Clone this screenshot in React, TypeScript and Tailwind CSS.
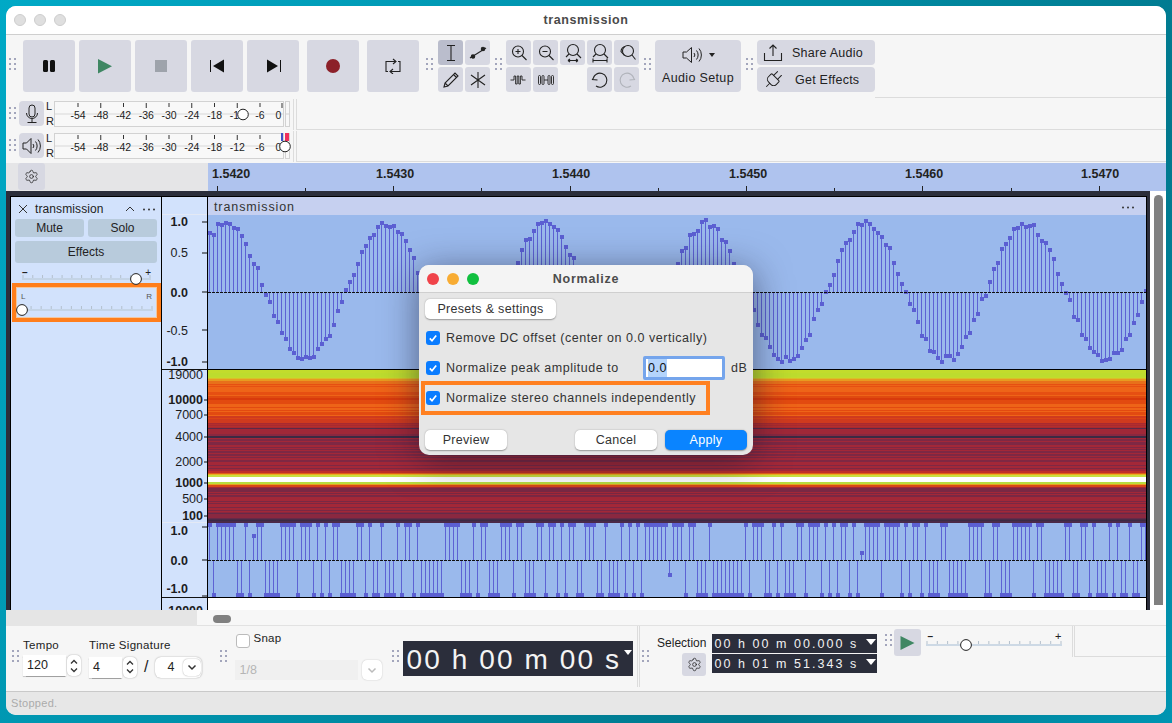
import type { ReactNode } from "react";
import { Plug, Settings } from "lucide-react";

const MAJOR = [217, 393, 570, 746, 922, 1099];
const MINOR = [305, 481, 658, 834, 1011];
const RULER_LABELS: [string, number][] = [
  ["1.5420", 212],
  ["1.5430", 376],
  ["1.5440", 552],
  ["1.5450", 729],
  ["1.5460", 905],
  ["1.5470", 1081],
];
const DB = ["-54", "-48", "-42", "-36", "-30", "-24", "-18", "-12", "-6", "0"];

const WAVE_W = 938;
const noise = (k: number) => {
  const v = Math.sin(k * 12.9898) * 43758.5453;
  return v - Math.floor(v);
};
const SAMPLES = Array.from({ length: 235 }, (_, k) => k);

// samples of the clipped lower clip that sit at +1, the rest sit at -1
const UP = new Set([
  0, 2, 3, 4, 5, 6, 9, 12, 13, 18, 19, 20, 21, 23, 24, 25, 27, 29, 31, 32, 37, 38, 40, 43, 47, 49, 50, 52, 59, 60, 61,
  62, 66, 68, 69, 73, 74, 75, 77, 78, 82, 83, 85, 86, 88, 90, 91, 94, 95, 96, 99, 103, 105, 107, 109, 110, 111, 112,
  113, 114, 116, 117, 118, 120, 121, 125, 134, 136, 137, 138, 141, 143, 147, 148, 150, 151, 152, 154, 156, 158, 159,
  161, 164, 165, 166, 167, 169, 170, 171, 172, 174, 176, 177, 179, 183, 184, 190, 191, 192, 193, 196, 197, 201, 202,
  203, 204, 205, 207, 208, 214, 215, 218, 219, 221, 225, 227, 230, 233, 234,
]);
const MID: Record<number, number> = { 11: 13, 115: 52, 163: 30 };

const SPEC_BANDS: [number, number, string, string][] = [
  [370, 378, "#bddc2e", "#c2dc2c"],
  [378, 379, "#d8c028", "#d8c028"],
  [379, 381, "#e89a20", "#e89a20"],
  [381, 384, "#e8701a", "#e8701a"],
  [384, 396, "#e64f12", "#ee6418"],
  [396, 400, "#d83a0c", "#e04a10"],
  [400, 416, "#e24a10", "#ee6418"],
  [416, 423, "#cf3a1e", "#dc4416"],
  [423, 428, "#a82a30", "#b42e2c"],
  [428, 429, "#5a2a48", "#5a2a48"],
  [429, 436, "#a02838", "#8a2840"],
  [436, 438, "#3a2a44", "#3a2a44"],
  [438, 471, "#a32838", "#7e2844"],
  [471, 473, "#c03028", "#c03028"],
  [473, 474, "#e06018", "#e06018"],
  [474, 475, "#e8b020", "#e8b020"],
  [475, 477, "#c8e040", "#c8e040"],
  [477, 482, "#ffffff", "#ffffff"],
  [482, 484, "#b8dc40", "#b8dc40"],
  [484, 485, "#e8a020", "#e8a020"],
  [485, 487, "#d84818", "#d84818"],
  [487, 512, "#a32838", "#7a2844"],
  [512, 519, "#8a2840", "#662a48"],
  [519, 523, "#4a2a48", "#3a2a44"],
];

function Grip({ className = "" }: { className?: string }) {
  return (
    <div className={`grid w-[7px] shrink-0 grid-cols-2 gap-x-[3px] gap-y-[3px] ${className}`}>
      {[0, 1, 2, 3, 4, 5].map((i) => (
        <span key={i} className="h-[2px] w-[2px] bg-[#a3a6bc]" />
      ))}
    </div>
  );
}

function Dots({ className = "" }: { className?: string }) {
  return (
    <svg width="14" height="3" viewBox="0 0 14 3" fill="#333" className={className}>
      <circle cx="2" cy="1.5" r="1" />
      <circle cx="7" cy="1.5" r="1" />
      <circle cx="12" cy="1.5" r="1" />
    </svg>
  );
}

function BigBtn({ children, className = "" }: { children: ReactNode; className?: string }) {
  return (
    <div className={`flex h-[52px] w-[52px] items-center justify-center rounded-[3px] bg-[#d7d8e2] ${className}`}>
      {children}
    </div>
  );
}

function Tool({ children, active, className = "" }: { children?: ReactNode; active?: boolean; className?: string }) {
  return (
    <div
      className={`flex h-[25px] w-[25px] items-center justify-center rounded-[3px] ${active ? "bg-[#babdcc]" : "bg-[#d7d8e2]"} ${className}`}
    >
      <svg width="22" height="22" viewBox="0 0 22 22" fill="none" stroke="currentColor" strokeWidth="1.1">
        {children}
      </svg>
    </div>
  );
}

function Meter({ thumb, peak }: { thumb: number; peak?: boolean }) {
  return (
    <svg width="240" height="28" className="shrink-0">
      <rect x="0.5" y="0.5" width="229" height="25" fill="#f8f8f8" stroke="#d2d2d2" />
      <line x1="1" x2="229" y1="13" y2="13" stroke="#d8d8d8" />
      {DB.map((d, i) => {
        const x = i === 9 ? 228 : 24 + i * 22.75;
        return (
          <g key={d}>
            <line x1={x} x2={x} y1={2} y2={i % 2 ? 7 : 6} stroke="#333" />
            <text x={i === 9 ? 224.5 : x} y={17.5} textAnchor="middle" fontSize="10.5" fill="#222">
              {d}
            </text>
          </g>
        );
      })}
      <rect x="231.5" y="0.5" width="4" height="25" fill="#f8f8f8" stroke="#d2d2d2" />
      <line x1="231" x2="236" y1="13" y2="13" stroke="#d2d2d2" />
      {peak && <rect x="227" y="0" width="2" height="8" fill="#3c52c8" />}
      {peak && <rect x="231" y="0" width="4" height="8" fill="#f0305c" />}
      <circle cx={thumb} cy="13.5" r="5.3" fill="#fff" stroke="#222" strokeWidth="1" />
    </svg>
  );
}

function MeterRow({ icon, thumb, peak }: { icon: ReactNode; thumb: number; peak?: boolean }) {
  return (
    <div className="flex h-[32px] items-start">
      <Grip className="ml-[3px] mt-[8px]" />
      <div className="ml-[3px] mt-[2px] flex h-[25px] w-[25px] items-center justify-center rounded-[4px] bg-[#d7d8e2]">
        {icon}
      </div>
      <div className="ml-[2px] mt-[1px] flex h-[28px] w-[8px] flex-col justify-between text-[11px] leading-[13px] text-[#222]">
        <span>L</span>
        <span>R</span>
      </div>
      <div className="mt-[2px] flex">
        <Meter thumb={thumb} peak={peak} />
      </div>
      <div className="ml-[-1px] h-[31px] w-[4px] border-x border-[#dcdcdc]" />
      <div className="h-[31px] flex-1 border-b border-[#dcdcdc]" />
    </div>
  );
}

function SmallSlider({ width, thumb, color = "#bfcfdf" }: { width: number; thumb: number; color?: string }) {
  const ticks = Array.from({ length: 14 }, (_, i) => 2 + (i * (width - 4)) / 13);
  return (
    <svg width={width} height="14" className="overflow-visible">
      {ticks.map((x) => (
        <line key={x} x1={x} x2={x} y1="5" y2="8" stroke="#b4c0cc" />
      ))}
      <line x1="1" x2={width - 1} y1="9" y2="9" stroke={color} strokeWidth="1.6" />
      <circle cx={thumb} cy="9" r="5.4" fill="#fff" stroke="#222" strokeWidth="1" />
    </svg>
  );
}

function TrackPanel() {
  return (
    <div className="flex w-[150px] shrink-0 flex-col bg-[#d2e2fc] text-[#222]">
      <div className="flex h-[22px] items-center pt-[2px]">
        <svg width="10" height="10" viewBox="0 0 10 10" className="ml-[7px]" stroke="#333" fill="none">
          <path d="M1 1l8 8M9 1l-8 8" />
        </svg>
        <span className="ml-[7px] flex-1 text-[12px] tracking-[0.1px]">transmission</span>
        <svg width="10" height="6" viewBox="0 0 10 6" stroke="#333" fill="none">
          <path d="M1 5l4-4 4 4" />
        </svg>
        <Dots className="ml-[7px] mr-[5px]" />
      </div>
      <div className="mt-0 flex gap-[4px] px-[4px]">
        <div className="flex h-[18px] flex-1 items-center justify-center rounded-[3px] bg-[#b8cbdc] text-[12px]">
          Mute
        </div>
        <div className="flex h-[18px] flex-1 items-center justify-center rounded-[3px] bg-[#b8cbdc] text-[12px]">
          Solo
        </div>
      </div>
      <div className="mx-[4px] mt-[4px] flex h-[22px] items-center justify-center rounded-[3px] bg-[#b8cbdc] text-[12px]">
        Effects
      </div>
      <div className="relative mt-[5px] h-[15px] px-[10px]">
        <span className="absolute left-[11px] top-[-3px] text-[10px] font-bold">–</span>
        <span className="absolute right-[10px] top-[-3px] text-[10px]">+</span>
        <div className="pt-[2px]">
          <SmallSlider width={131} thumb={115} />
        </div>
      </div>
      <div className="ml-[1px] border-[4px] border-[#ff7e1c] p-0">
        <div className="relative h-[31px] border border-[#f3c79f] px-[2px]">
          <span className="absolute left-[4px] top-[3px] text-[8px] text-[#555]">L</span>
          <span className="absolute right-[4px] top-[3px] text-[8px] text-[#555]">R</span>
          <div className="pt-[13px]">
            <SmallSlider width={135} thumb={3} />
          </div>
        </div>
      </div>
    </div>
  );
}

function VRuler() {
  const big = [
    ["1.0", 226, true],
    ["0.5", 257, false],
    ["0.0", 297, true],
    ["-0.5", 335, false],
    ["-1.0", 366, true],
    ["19000", 379, false],
    ["10000", 404, true],
    ["7000", 419, false],
    ["4000", 441, false],
    ["2000", 466, false],
    ["1000", 487, true],
    ["500", 503, false],
    ["100", 520, true],
    ["1.0", 535, true],
    ["0.0", 565, true],
    ["-1.0", 593, true],
    ["10000", 615, true],
  ] as const;
  const ticks = [222, 253, 292, 330, 362, 400, 415, 437, 462, 483, 499, 516, 527, 560, 596];
  return (
    <svg width="45" height="413" viewBox="162 197 45 413" className="shrink-0">
      <rect x="162" y="197" width="45" height="413" fill="#d2e2fc" />
      <line x1="162" x2="207" y1="214.5" y2="214.5" stroke="#e3e9f5" />
      {big.map(([t, y, b]) => (
        <text
          key={`${t}${y}`}
          x={t === "1.0" || t === "0.0" || t === "0.5" || t === "-1.0" || t === "-0.5" ? 188 : 203}
          y={y}
          textAnchor="end"
          fontSize="12.5"
          fontWeight={b ? 700 : 400}
          fill="#1c1c1c"
        >
          {t}
        </text>
      ))}
      {ticks.map((y) => (
        <line key={y} x1={y > 370 && y < 523 ? 204 : 202} x2="207" y1={y} y2={y} stroke="#111" />
      ))}
      <line x1="162" x2="207" y1="369.5" y2="369.5" stroke="#111" />
      <line x1="162" x2="207" y1="522.5" y2="522.5" stroke="#e3e9f5" />
      <line x1="162" x2="207" y1="597.5" y2="597.5" stroke="#111" />
    </svg>
  );
}

function Wave() {
  return (
    <svg width={WAVE_W} height="154" viewBox="208 215 938 154" className="block" shapeRendering="crispEdges">
      <rect x="208" y="215" width="938" height="154" fill="#9ab9ec" />
      {SAMPLES.map((k) => {
        const x = 209 + k * 4;
        const s = Math.sin((2 * Math.PI * (x - 185)) / 160);
        const y = Math.round(292 - s * 68 + (noise(k) - 0.5) * 8);
        return (
          <g key={k}>
            <line x1={x + 0.5} x2={x + 0.5} y1="292" y2={y} stroke="#5d62d4" />
            <rect x={x - 1} y={y - 2} width="4" height="4" fill="#5b5fd2" />
          </g>
        );
      })}
      <line x1="208" x2="1146" y1="292.5" y2="292.5" stroke="#111" strokeDasharray="3 1" />
    </svg>
  );
}

function Spectrogram() {
  const rows: ReactNode[] = [];
  SPEC_BANDS.forEach(([a, b, c1, c2]) => {
    for (let y = a; y < b; y++) {
      rows.push(<rect key={y} x="208" y={y} width="938" height="1" fill={noise(y * 3) > 0.55 ? c2 : c1} />);
    }
  });
  return (
    <svg width={WAVE_W} height="153" viewBox="208 370 938 153" className="block" shapeRendering="crispEdges">
      {rows}
    </svg>
  );
}

function ClipWave() {
  return (
    <svg width={WAVE_W} height="74" viewBox="208 523 938 74" className="block" shapeRendering="crispEdges">
      <rect x="208" y="523" width="938" height="74" fill="#9ab9ec" />
      {SAMPLES.map((k) => {
        const x = 209 + k * 4;
        const y = MID[k] !== undefined ? 523 + MID[k] : UP.has(k) ? 525 : 595;
        return (
          <g key={k}>
            <line x1={x + 0.5} x2={x + 0.5} y1="560" y2={y} stroke="#5d62d4" />
            <rect x={x - 1} y={y - 2} width="4" height="4" fill="#5b5fd2" />
          </g>
        );
      })}
      <line x1="208" x2="1146" y1="560.5" y2="560.5" stroke="#111" strokeDasharray="3 1" />
    </svg>
  );
}

function Check() {
  return (
    <div className="flex h-[14px] w-[14px] shrink-0 items-center justify-center rounded-[3px] bg-[#0a7cff]">
      <svg width="10" height="10" viewBox="0 0 10 10" fill="none" stroke="#fff" strokeWidth="1.7">
        <path d="M1.8 5.4l2.2 2.4 4.2-5.4" />
      </svg>
    </div>
  );
}

function DialogBtn({ children, className = "" }: { children: ReactNode; className?: string }) {
  return (
    <div
      className={`flex h-[20px] items-center justify-center rounded-[5px] bg-white text-[12.5px] tracking-[0.3px] text-[#333] shadow-[0_0.5px_1.5px_rgba(0,0,0,0.35)] ${className}`}
    >
      {children}
    </div>
  );
}

function NormalizeDialog() {
  return (
    <div className="absolute left-[413px] top-[259px] h-[190px] w-[334px] overflow-hidden rounded-[10px] bg-[#e6e6e6] shadow-[0_6px_36px_rgba(20,20,40,0.55)]">
      <div className="relative flex h-[28px] items-center justify-center border-b border-[#cfcfcf] bg-[#f4f4f4] pt-[1px] text-[12.5px] font-bold tracking-[0.75px] text-[#4c4c4c]">
        <div className="absolute left-[8px] top-[8px] flex gap-[8px]">
          <span className="h-[12px] w-[12px] rounded-full bg-[#f0434a]" />
          <span className="h-[12px] w-[12px] rounded-full bg-[#f8ac33]" />
          <span className="h-[12px] w-[12px] rounded-full bg-[#11c03f]" />
        </div>
        Normalize
      </div>
      <DialogBtn className="ml-[6px] mt-[6px] w-[131px]">Presets &amp; settings</DialogBtn>
      <div className="ml-[7px] mt-[11px] flex h-[16px] items-center gap-[6px] text-[12.5px] tracking-[0.53px] text-[#333]">
        <Check />
        Remove DC offset (center on 0.0 vertically)
      </div>
      <div className="mt-[10px] flex h-[24px] items-center pl-[7px] text-[12.5px] tracking-[0.53px] text-[#333]">
        <Check />
        <span className="ml-[6px] w-[197px]">Normalize peak amplitude to</span>
        <div className="flex h-[24px] w-[82px] items-center rounded-[2px] border-[3px] border-[#75a5ec] bg-white pl-[2px] text-[#111]">
          <span className="bg-[#b4d4fb]">0.0</span>
        </div>
        <span className="ml-[6px]">dB</span>
      </div>
      <div className="ml-[2px] mt-[1px] flex h-[34px] w-[289px] items-center gap-[6px] border-[4px] border-[#ff8020] pl-[1px] text-[12.5px] tracking-[0.53px] text-[#333]">
        <Check />
        Normalize stereo channels independently
      </div>
      <div className="mt-[15px] flex px-[6px]">
        <DialogBtn className="w-[82px]">Preview</DialogBtn>
        <div className="flex-1" />
        <DialogBtn className="w-[82px]">Cancel</DialogBtn>
        <DialogBtn className="ml-[8px] w-[82px] !bg-[#0a84ff] !text-white">Apply</DialogBtn>
      </div>
    </div>
  );
}

function Stepper() {
  return (
    <div className="ml-[1px] flex h-[21px] w-[14px] flex-col items-center justify-center rounded-[5px] bg-white shadow-[0_0_1.5px_rgba(0,0,0,0.4)]">
      <svg width="8" height="16" viewBox="0 0 8 16" fill="none" stroke="#333" strokeWidth="1.3">
        <path d="M1 5.5l3-3 3 3M1 10.5l3 3 3-3" />
      </svg>
    </div>
  );
}

function Chevron({ stroke = "#333" }: { stroke?: string }) {
  return (
    <svg width="10" height="7" viewBox="0 0 10 7" fill="none" stroke={stroke} strokeWidth="1.5">
      <path d="M1.5 1.5L5 5l3.5-3.5" />
    </svg>
  );
}

function TimeField({ children }: { children: ReactNode }) {
  return (
    <div className="flex h-[19px] w-[165px] items-center justify-between whitespace-pre bg-[#2b2e3b] pl-[2px] pr-[1px] text-[12.5px] tracking-[2.05px] text-[#f2f2f2]">
      <span className="pt-[2px]">{children}</span>
      <span className="mb-[3px] h-0 w-0 border-x-[5px] border-t-[6px] border-x-transparent border-t-white" />
    </div>
  );
}

export default function App() {
  return (
    <div className="h-[723px] w-[1172px] overflow-hidden bg-[linear-gradient(125deg,#00a9c6_0%,#0092ac_40%,#00788d_75%,#0095b2_100%)] pl-[6px] pt-[6px] [font-family:'Liberation_Sans',Arial,sans-serif]">
      <div className="relative flex h-[709px] w-[1160px] flex-col overflow-hidden rounded-[10px] bg-[#f6f6f6]">
        {/* title bar */}
        <div className="relative flex h-[29px] shrink-0 items-center justify-center border-b border-[#cfcfcf] bg-white text-[12.5px] font-bold tracking-[0.6px] text-[#4a4a4a]">
          <div className="absolute left-[8px] top-[8px] flex gap-[8px]">
            <span className="h-[12px] w-[12px] rounded-full border border-[#cdcdcd] bg-[#dfdfdf]" />
            <span className="h-[12px] w-[12px] rounded-full border border-[#cdcdcd] bg-[#dfdfdf]" />
            <span className="h-[12px] w-[12px] rounded-full border border-[#cdcdcd] bg-[#dfdfdf]" />
          </div>
          transmission
        </div>

        {/* transport + tools */}
        <div className="flex h-[64px] shrink-0 items-start pt-[5px]">
          <Grip className="ml-[3px] mt-[18px]" />
          <div className="ml-[7px] flex gap-[4px]">
            <BigBtn>
              <svg width="12" height="13">
                <rect x="0" y="0" width="5" height="12" rx="1.5" fill="#111" />
                <rect x="7" y="0" width="5" height="12" rx="1.5" fill="#111" />
              </svg>
            </BigBtn>
            <BigBtn>
              <svg width="15" height="15">
                <path d="M0 0l14 7.2L0 14.5z" fill="#3f8763" />
              </svg>
            </BigBtn>
            <BigBtn>
              <div className="h-[12px] w-[12px] bg-[#9ea3ab]" />
            </BigBtn>
            <BigBtn>
              <svg width="15" height="14">
                <path d="M0.5 1v12" stroke="#111" />
                <path d="M14 0.5v13L3 7z" fill="#111" />
              </svg>
            </BigBtn>
            <BigBtn>
              <svg width="15" height="14">
                <path d="M14.5 1v12" stroke="#111" />
                <path d="M1 0.5v13L12 7z" fill="#111" />
              </svg>
            </BigBtn>
            <BigBtn className="ml-[4px]">
              <div className="h-[14px] w-[14px] rounded-full bg-[#8c2029]" />
            </BigBtn>
            <BigBtn className="ml-[4px]">
              <svg width="16" height="16" viewBox="0 0 16 16" fill="none" stroke="#222" strokeWidth="1.1">
                <path d="M3 13.5H1V3.5h10M8 1l3 2.5L8 6M5 13.5h10v-10h-2M8 11l-3 2.5L8 16" />
              </svg>
            </BigBtn>
          </div>
          <Grip className="ml-[7px] mt-[18px]" />
          <div className="ml-[5px] grid grid-cols-[25px_25px] gap-[2px] text-[#222]">
            <Tool active>
              <path d="M7 3.5h8M7 18.5h8M11 3.5v15" />
            </Tool>
            <Tool>
              <path d="M3 16l16-10" />
              <circle cx="6" cy="14.5" r="1.7" fill="currentColor" />
              <circle cx="16" cy="7" r="1.7" fill="currentColor" />
            </Tool>
            <Tool>
              <path d="M4 18l1-4L15 4l3 3L8 17zM5 14l3 3M13.5 5.5l3 3" />
            </Tool>
            <Tool>
              <path d="M11 3v16M4 6l14 10M18 6L4 16" />
            </Tool>
          </div>
          <Grip className="ml-[5px] mt-[18px]" />
          <div className="ml-[4px] grid grid-cols-[repeat(5,25px)] gap-[2px] text-[#222]">
            <Tool>
              <circle cx="10" cy="9.5" r="5.5" />
              <path d="M14 13.5l4.5 4.5M7.5 9.5h5M10 7v5" />
            </Tool>
            <Tool>
              <circle cx="10" cy="9.5" r="5.5" />
              <path d="M14 13.5l4.5 4.5M7.5 9.5h5" />
            </Tool>
            <Tool>
              <circle cx="11" cy="8" r="5.5" />
              <path d="M15 12l4 4M7 12l-3 3M6 18.5h10M6 18.5l2-1.5M6 18.5l2 1.5M16 18.5l-2-1.5M16 18.5l-2 1.5" />
            </Tool>
            <Tool>
              <circle cx="11" cy="8" r="5.5" />
              <path d="M15 12l4 4M7 12l-3 3M4 18.5h14M4 16.5v4M18 16.5v4" />
            </Tool>
            <Tool>
              <circle cx="12" cy="9" r="5.5" />
              <path d="M9 4.5a5.5 5.5 0 0 0-4 5l3.5 4M16 13l3.5 4.5" />
            </Tool>
            <Tool>
              <g strokeWidth="0.9">
                <path d="M2.5 11h3.5V7h1.6v8h1.6V7h1.6v8h1.6V7h1.6v4h3.5" />
              </g>
            </Tool>
            <Tool>
              <g strokeWidth="0.9">
                <path d="M3.5 7.5a1 1 0 0 1 2 0v7a1 1 0 0 1-2 0zM7 7.5a1 1 0 0 1 2 0v7a1 1 0 0 1-2 0zM9 11h4M13 7.5a1 1 0 0 1 2 0v7a1 1 0 0 1-2 0zM16.5 7.5a1 1 0 0 1 2 0v7a1 1 0 0 1-2 0z" />
              </g>
            </Tool>
            <div />
            <Tool>
              <path d="M6 6L3.5 10.5 8.5 11M4 10a7 7 0 1 1 3 7" />
            </Tool>
            <Tool className="text-[#b0b3ba]">
              <path d="M16 6l2.5 4.5-5 .5M18 10a7 7 0 1 0-3 7" />
            </Tool>
          </div>
          <Grip className="ml-[5px] mt-[18px]" />
          <div className="ml-[4px] flex h-[52px] w-[86px] flex-col items-center rounded-[4px] bg-[#d7d8e2] text-[#222]">
            <div className="flex h-[30px] items-center gap-[5px]">
              <svg width="22" height="18" viewBox="0 0 22 18" fill="none" stroke="#222" strokeWidth="1">
                <path d="M1 6h3.5L9.5 1.5v15L4.5 12H1zM12 7a3 3 0 0 1 0 4M14.5 4.5a7 7 0 0 1 0 9M17 2.5a10 10 0 0 1 0 13" />
              </svg>
              <span className="h-0 w-0 border-x-[3px] border-t-[4px] border-x-transparent border-t-[#222]" />
            </div>
            <span className="mt-[-1px] text-[12.5px] tracking-[0.35px]">Audio Setup</span>
          </div>
          <Grip className="ml-[5px] mt-[18px]" />
          <div className="ml-[4px] flex w-[118px] flex-col gap-[2px] text-[12.5px] tracking-[0.25px] text-[#222]">
            <div className="flex h-[25px] items-center rounded-[4px] bg-[#d7d8e2]">
              <svg width="20" height="20" viewBox="0 0 20 20" fill="none" stroke="#222" strokeWidth="1.1" className="ml-[6px]">
                <path d="M1.5 10v7.5h17V10M10 13V2M6.5 5.5L10 2l3.5 3.5" />
              </svg>
              <span className="ml-[9px] pt-[2px]">Share Audio</span>
            </div>
            <div className="flex h-[25px] items-center rounded-[4px] bg-[#d7d8e2]">
              <Plug size={22} strokeWidth={1.1} className="ml-[5px] rotate-45" />
              <span className="ml-[11px] pt-[2px]">Get Effects</span>
            </div>
          </div>
          <div className="mt-[57px] h-px flex-1 bg-[#dcdcdc]" />
        </div>

        {/* meters */}
        <MeterRow
          thumb={189}
          icon={
            <svg width="16" height="20" viewBox="0 0 16 20" fill="none" stroke="#222" strokeWidth="1">
              <rect x="5" y="1" width="6" height="12" rx="3" />
              <path d="M2.5 9a5.5 5.5 0 0 0 11 0M8 15v3M3.5 18.5h9" />
            </svg>
          }
        />
        <MeterRow
          thumb={231}
          peak
          icon={
            <svg width="20" height="18" viewBox="0 0 20 18" fill="none" stroke="#222" strokeWidth="1">
              <path d="M1 6h3.5L9 1.5v15L4.5 12H1zM11 7a3 3 0 0 1 0 4M13.5 4.5a7 7 0 0 1 0 9M16 2.5a10 10 0 0 1 0 13" />
            </svg>
          }
        />

        {/* ruler */}
        <div className="flex h-[28px] shrink-0">
          <div className="flex w-[202px] items-start bg-[#e5e5e7] pl-[12px]">
            <div className="flex h-[27px] w-[27px] items-center justify-center rounded-[3px] bg-[#d7d8e2]">
              <Settings size={15} strokeWidth={1.2} color="#222" />
            </div>
          </div>
          <svg width="958" height="28" viewBox="208 163 958 28" className="block">
            <rect x="208" y="163" width="958" height="28" fill="#afc3ee" />
            {RULER_LABELS.map(([t, x]) => (
              <text key={t} x={x} y="178" fontSize="12.5" fontWeight="700" fill="#222">
                {t}
              </text>
            ))}
            {MAJOR.map((x) => (
              <line key={x} x1={x + 0.5} x2={x + 0.5} y1="186" y2="191" stroke="#222" />
            ))}
            {MINOR.map((x) => (
              <line key={x} x1={x + 0.5} x2={x + 0.5} y1="188" y2="191" stroke="#222" />
            ))}
          </svg>
        </div>

        {/* tracks */}
        <div className="flex h-[419px] shrink-0">
          <div className="flex w-[1144px] flex-col bg-[#2b2e3b] pl-[4px] pr-[3px] pt-[5px]">
            <div className="flex h-[414px] border-l border-t border-r border-black bg-white">
              <TrackPanel />
              <div className="w-px shrink-0 bg-black" />
              <VRuler />
              <div className="w-px shrink-0 bg-black" />
              <div className="flex flex-1 flex-col overflow-hidden">
                <div className="flex h-[18px] shrink-0 items-center justify-between bg-[#c6d0f0] pl-[6px] pr-[11px] pt-[2px] text-[12.5px] tracking-[0.9px] text-[#333]">
                  <span>transmission</span>
                  <Dots />
                </div>
                <Wave />
                <div className="h-px shrink-0 bg-black" />
                <Spectrogram />
                <ClipWave />
                <div className="h-px shrink-0 bg-black" />
              </div>
            </div>
          </div>
          <div className="flex-1 bg-white pl-[4px] pt-[4px]">
            <div className="h-[410px] w-[9px] rounded-t-full bg-[#808080]" />
          </div>
        </div>

        {/* horizontal scrollbar */}
        <div className="flex h-[16px] shrink-0">
          <div className="w-[191px] bg-[#e5e5e5]" />
          <div className="flex-1 border-b border-[#e2e2e2] bg-[#f7f7f7] pl-[16px] pt-[5px]">
            <div className="h-[8px] w-[18px] rounded-full bg-[#808080]" />
          </div>
        </div>

        {/* bottom toolbar */}
        <div className="flex h-[66px] shrink-0 items-start border-b border-[#c9c9c9] text-[#222]">
          <Grip className="ml-[6px] mt-[24px]" />
          <div className="ml-[4px] mt-[12px]">
            <div className="text-[11.5px] leading-[14px] tracking-[0.3px]">Tempo</div>
            <div className="mt-[3px] flex items-center">
              <div className="flex h-[21px] w-[43px] items-center bg-white pl-[4px] text-[12.5px] shadow-[0_0.5px_1px_rgba(0,0,0,0.35)]">
                120
              </div>
              <Stepper />
            </div>
          </div>
          <div className="ml-[8px] mt-[12px]">
            <div className="text-[11.5px] leading-[14px] tracking-[0.3px]">Time Signature</div>
            <div className="mt-[3px] flex items-center">
              <div className="flex h-[21px] w-[33px] items-center bg-white pl-[4px] text-[12.5px] shadow-[0_0.5px_1px_rgba(0,0,0,0.35)]">
                4
              </div>
              <Stepper />
              <span className="ml-[7px] mr-[7px] text-[16px]">/</span>
              <div className="flex h-[21px] w-[47px] items-center rounded-[6px] bg-white pl-[12px] text-[12.5px] shadow-[0_0_1.5px_rgba(0,0,0,0.4)]">
                <span className="flex-1">4</span>
                <span className="mr-[1px] flex h-[17px] w-[18px] items-center justify-center rounded-[5px] shadow-[0_0_1.5px_rgba(0,0,0,0.4)]">
                  <Chevron />
                </span>
              </div>
            </div>
          </div>
          <Grip className="ml-[18px] mt-[24px]" />
          <div className="ml-[9px] mt-[8px]">
            <div className="flex h-[14px] items-center">
              <div className="h-[14px] w-[14px] rounded-[3px] border border-[#bbb] bg-white" />
              <span className="ml-[3px] mt-[-5px] text-[11.5px] tracking-[0.3px]">Snap</span>
            </div>
            <div className="ml-[-1px] mt-[12px] flex items-center">
              <div className="flex h-[20px] w-[123px] items-center bg-[#f0f0f0] pl-[4px] text-[12.5px] text-[#b5b5b5]">
                1/8
              </div>
              <span className="ml-[4px] flex h-[20px] w-[20px] items-center justify-center rounded-[5px] bg-white shadow-[0_0_1.5px_rgba(0,0,0,0.25)]">
                <Chevron stroke="#bbb" />
              </span>
            </div>
          </div>
          <Grip className="ml-[10px] mt-[24px]" />
          <div className="ml-[4px] mt-[15px] flex h-[35px] w-[230px] items-center whitespace-pre bg-[#2b2e3b] pl-[3px] text-[28px] tracking-[2.1px] text-[#f4f4f4]">
            <span className="flex-1 pt-[3px]">00 h 00 m 00 s</span>
            <span className="mb-[12px] mr-[1px] h-0 w-0 border-x-[4px] border-t-[5px] border-x-transparent border-t-white" />
          </div>
          <div className="ml-[4px] h-[61px] w-[3px] border-x border-[#dcdcdc]" />
          <Grip className="ml-[2px] mt-[24px]" />
          <div className="ml-[8px] mt-[8px] flex w-[49px] shrink-0 flex-col items-end">
            <span className="mt-[2px] text-[12px] leading-[14px]">Selection</span>
            <div className="mt-[3px] flex h-[23px] w-[24px] items-center justify-center rounded-[3px] bg-[#d7d8e2]">
              <Settings size={15} strokeWidth={1.2} color="#222" />
            </div>
          </div>
          <div className="ml-[6px] mt-[8px] flex flex-col gap-[1px]">
            <TimeField>00 h 00 m 00.000 s</TimeField>
            <TimeField>00 h 01 m 51.343 s</TimeField>
          </div>
          <Grip className="ml-[8px] mt-[8px]" />
          <div className="ml-[2px] mt-[3px] flex h-[27px] w-[27px] items-center justify-center rounded-[3px] bg-[#d7d8e2]">
            <svg width="15" height="16">
              <path d="M0.5 1l14 7-14 7z" fill="#3f8763" />
            </svg>
          </div>
          <div className="relative ml-[4px] mt-[7px]">
            <span className="absolute left-[2px] top-[-4px] text-[10px] font-bold">–</span>
            <span className="absolute right-[2px] top-[-5px] text-[11px]">+</span>
            <div className="pt-[3px]">
              <SmallSlider width={138} thumb={41} />
            </div>
          </div>
          <div className="ml-[9px] h-[31px] w-[3px] border-x border-[#dcdcdc]" />
          <div className="h-[31px] flex-1 border-b border-[#dcdcdc]" />
        </div>

        {/* status bar */}
        <div className="flex h-[23px] flex-1 items-center bg-[#e7e7e7] pl-[5px] text-[11px] tracking-[0.3px] text-[#ababab]">
          Stopped.
        </div>

        <NormalizeDialog />
      </div>
    </div>
  );
}
